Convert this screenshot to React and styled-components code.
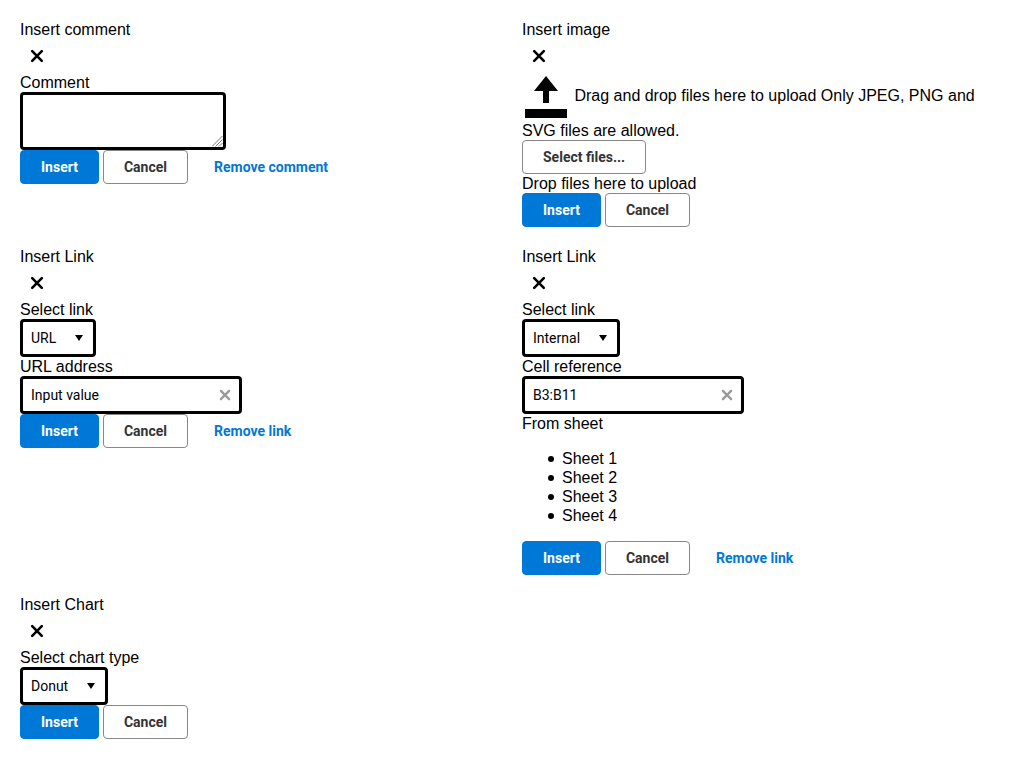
import React from "react";
import styled, { createGlobalStyle } from "styled-components";

const GlobalStyle = createGlobalStyle`
  *, *::before, *::after { box-sizing: border-box; }
  body {
    margin: 0;
    background: #fff;
    color: #000;
    font: 16px/19px "Liberation Sans", Arial, sans-serif;
  }
`;

const Page = styled.main`
  display: grid;
  grid-template-columns: 1fr 1fr;
  gap: 20px;
  padding: 20px;
`;

const Dialog = styled.section`
  min-width: 0;
`;

const CloseButton = styled.button`
  display: flex;
  align-items: center;
  justify-content: center;
  width: 34px;
  height: 34px;
  padding: 0;
  border: 0;
  background: none;
  color: #000;
`;

const fieldFrame = `
  border: 3px solid #000;
  border-radius: 4px;
  background: #fff;
  color: #000;
  font: 14px/20px Roboto, sans-serif;
`;

const CommentField = styled.div`
  position: relative;
  width: 206px;
  height: 58px;
`;

const CommentArea = styled.textarea`
  ${fieldFrame}
  display: block;
  width: 100%;
  height: 100%;
  padding: 5px 8px;
  outline: 0;
  resize: none;
`;

const ResizeGrip = styled.svg`
  position: absolute;
  right: 3px;
  bottom: 3px;
`;

const Picker = styled.button`
  ${fieldFrame}
  display: flex;
  align-items: center;
  justify-content: space-between;
  width: ${(p) => p.$width}px;
  height: 38px;
  padding: 0 10px 0 8px;
`;

const InputBox = styled.div`
  ${fieldFrame}
  display: flex;
  align-items: center;
  width: 222px;
  height: 38px;
  padding: 0 8px;
`;

const TextInput = styled.input`
  flex: 1;
  min-width: 0;
  padding: 0;
  border: 0;
  outline: 0;
  font: inherit;
  color: inherit;
`;

const Actions = styled.div`
  display: flex;
  gap: 4px;
`;

const Button = styled.button`
  height: 34px;
  padding: 0 20px;
  border: 1px solid #888;
  border-radius: 4px;
  background: #fff;
  color: #333;
  font: bold 14px/20px Roboto, sans-serif;
  white-space: nowrap;
`;

const PrimaryButton = styled(Button)`
  border-color: #0078d7;
  background: #0078d7;
  color: #fff;
`;

const LinkButton = styled(Button)`
  padding: 0 21px;
  border-color: transparent;
  background: none;
  color: #0078d7;
`;

const UploadIcon = styled.svg`
  width: 48px;
  height: 48px;
  vertical-align: middle;
`;

const SheetList = styled.ul`
  margin: 16px 0;
  padding-left: 26px;
  list-style: none;
`;

const SheetItem = styled.li`
  display: flex;
  align-items: center;

  &::before {
    content: "";
    width: 6px;
    height: 6px;
    margin: 1px 8px 0 0;
    border-radius: 50%;
    background: #000;
  }
`;

const Cross = ({ size, color, weight }) => (
  <svg
    width={size}
    height={size}
    viewBox="0 0 14 14"
    fill="none"
    stroke={color}
    strokeWidth={weight}
    strokeLinecap="round"
  >
    <path d="M2.2 2.2 11.8 11.8M11.8 2.2 2.2 11.8" />
  </svg>
);

const Header = ({ title }) => (
  <>
    <div>{title}</div>
    <CloseButton aria-label="Close">
      <Cross size={14} color="#000" weight={2.6} />
    </CloseButton>
  </>
);

const Select = ({ value, width }) => (
  <Picker $width={width}>
    {value}
    <svg width="8" height="6" viewBox="0 0 8 6">
      <path d="M0 0h8L4 6z" />
    </svg>
  </Picker>
);

const ClearableInput = ({ value }) => (
  <InputBox>
    <TextInput defaultValue={value} />
    <Cross size={12} color="#999" weight={2.7} />
  </InputBox>
);

const Footer = ({ remove }) => (
  <Actions>
    <PrimaryButton>Insert</PrimaryButton>
    <Button>Cancel</Button>
    {remove && <LinkButton>{remove}</LinkButton>}
  </Actions>
);

export default function App() {
  return (
    <>
      <GlobalStyle />
      <Page>
        <Dialog>
          <Header title="Insert comment" />
          <div>Comment</div>
          <CommentField>
            <CommentArea />
            <ResizeGrip width="11" height="11" viewBox="0 0 11 11" fill="none" stroke="#777">
              <path d="M0 10.5 10.5 0M3.5 10.5 10.5 3.5M7 10.5 10.5 7" />
            </ResizeGrip>
          </CommentField>
          <Footer remove="Remove comment" />
        </Dialog>

        <Dialog>
          <Header title="Insert image" />
          <div>
            <UploadIcon viewBox="0 0 48 48">
              <path d="M24 3 36 18H27V30H21V18H12ZM3 36H45V45H3Z" />
            </UploadIcon>{" "}
            Drag and drop files here to upload Only JPEG, PNG and SVG files are allowed.
          </div>
          <Actions>
            <Button>Select files...</Button>
          </Actions>
          <div>Drop files here to upload</div>
          <Footer />
        </Dialog>

        <Dialog>
          <Header title="Insert Link" />
          <div>Select link</div>
          <Select value="URL" width={76} />
          <div>URL address</div>
          <ClearableInput value="Input value" />
          <Footer remove="Remove link" />
        </Dialog>

        <Dialog>
          <Header title="Insert Link" />
          <div>Select link</div>
          <Select value="Internal" width={98} />
          <div>Cell reference</div>
          <ClearableInput value="B3:B11" />
          <div>From sheet</div>
          <SheetList>
            <SheetItem>Sheet 1</SheetItem>
            <SheetItem>Sheet 2</SheetItem>
            <SheetItem>Sheet 3</SheetItem>
            <SheetItem>Sheet 4</SheetItem>
          </SheetList>
          <Footer remove="Remove link" />
        </Dialog>

        <Dialog>
          <Header title="Insert Chart" />
          <div>Select chart type</div>
          <Select value="Donut" width={88} />
          <Footer />
        </Dialog>
      </Page>
    </>
  );
}
